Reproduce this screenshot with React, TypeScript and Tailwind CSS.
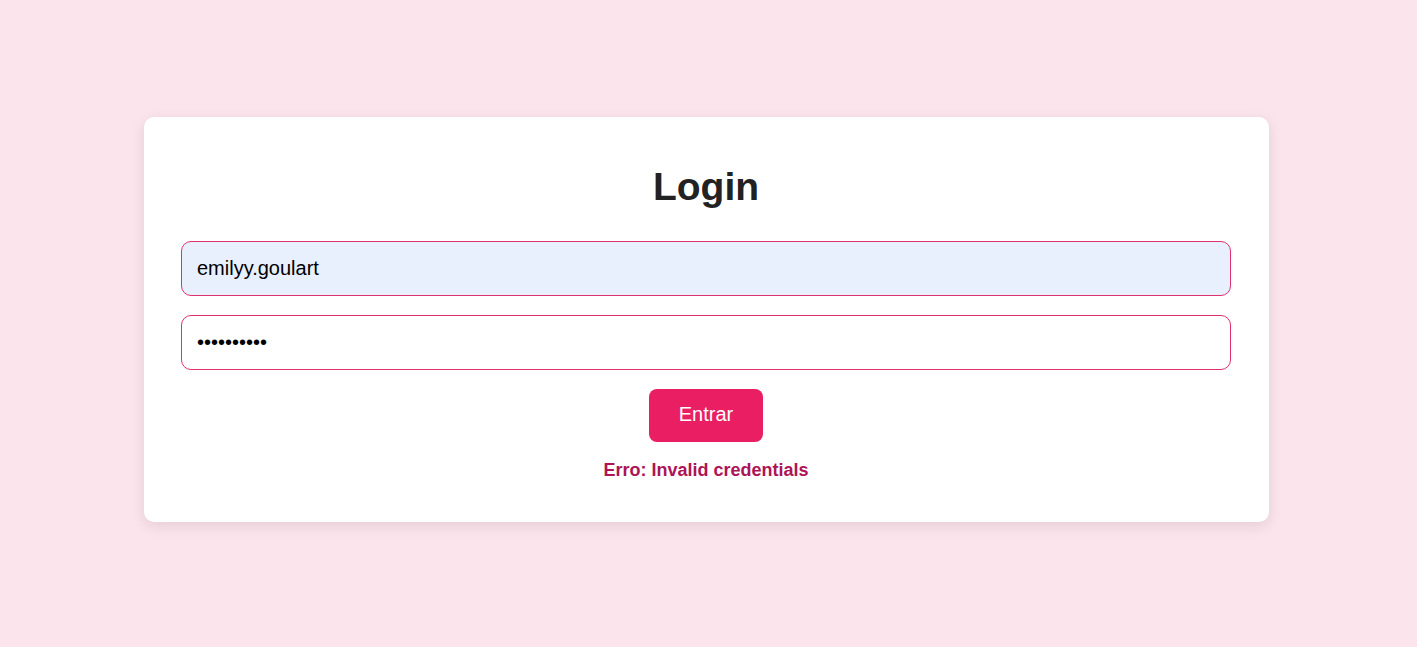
import React, { useState } from 'react';

export default function App() {
    const [username, setUsername] = useState('emilyy.goulart');
    const [password, setPassword] = useState('0123456789');
    const [error] = useState('Invalid credentials');

    return (
        <div className="min-h-[647px] w-full bg-[#fce4ec] pt-[117px]" style={{ fontFamily: '"Liberation Sans", Arial, sans-serif' }}>
            <div className="ml-[144px] w-[1125px] rounded-[10px] bg-white pt-[48px] pb-[41px] pl-[37px] pr-[38px] shadow-[0_4px_14px_rgba(0,0,0,0.1)] flex flex-col items-center">
                <h2 className="text-[39px] leading-[44px] font-bold text-[#222222]">Login</h2>
                <form className="w-full flex flex-col items-center mt-[32px]" onSubmit={(e) => e.preventDefault()}>
                    <input
                        type="text"
                        value={username}
                        onChange={(e) => setUsername(e.target.value)}
                        className="w-full h-[55px] rounded-[10px] border border-[#e0316e] bg-[#e8f0fe] px-[15px] text-[20px] text-black outline-none"
                    />
                    <input
                        type="password"
                        value={password}
                        onChange={(e) => setPassword(e.target.value)}
                        className="w-full h-[55px] mt-[19px] rounded-[10px] border border-[#e0316e] bg-white px-[15px] text-[20px] text-black outline-none"
                    />
                    <button type="submit" className="mt-[19px] w-[114px] h-[53px] pb-[4px] rounded-[8px] bg-[#e91e63] text-white text-[20px]">Entrar</button>
                    {error && <p className="mt-[18px] text-[18px] leading-[21px] font-bold text-[#ad1457]">Erro: {error}</p>}
                </form>
            </div>
        </div>
    );
}
